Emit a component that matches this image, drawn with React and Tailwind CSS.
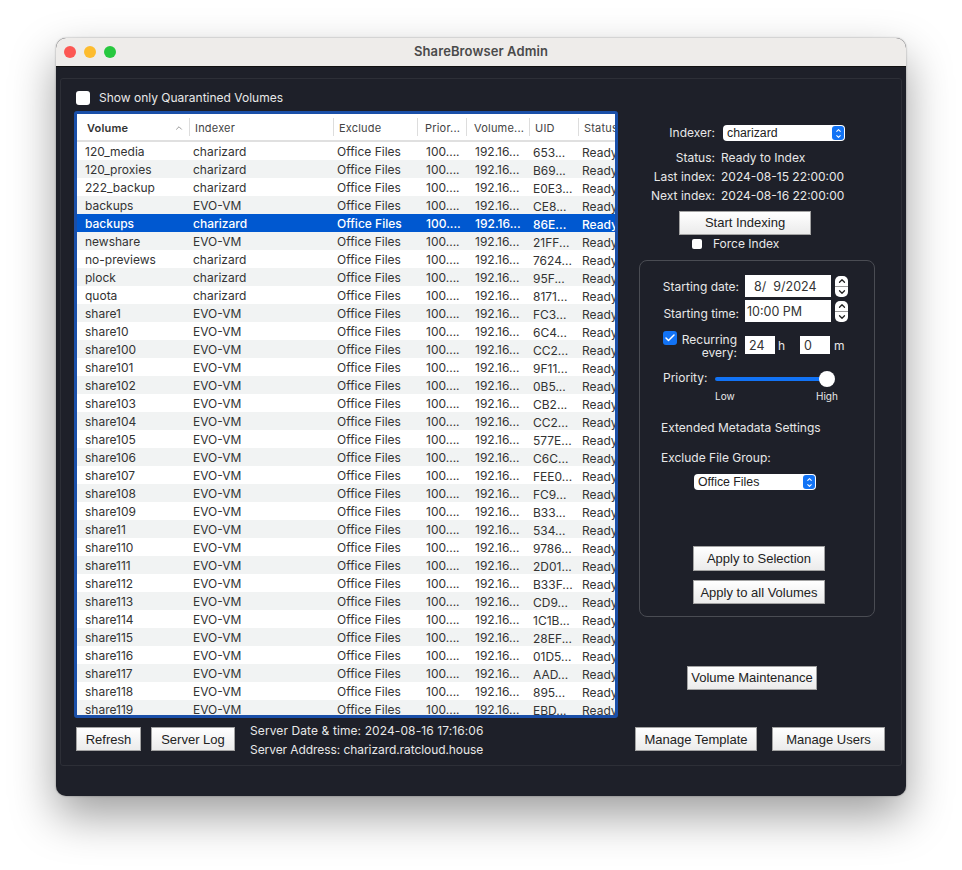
import React from "react";
import { Check, ChevronUp, ChevronDown } from "lucide-react";

const rows = [
  ["120_media", "charizard", "653..."],
  ["120_proxies", "charizard", "B69..."],
  ["222_backup", "charizard", "E0E3..."],
  ["backups", "EVO-VM", "CE8..."],
  ["backups", "charizard", "86E..."],
  ["newshare", "EVO-VM", "21FF..."],
  ["no-previews", "charizard", "7624..."],
  ["plock", "charizard", "95F..."],
  ["quota", "charizard", "8171..."],
  ["share1", "EVO-VM", "FC3..."],
  ["share10", "EVO-VM", "6C4..."],
  ["share100", "EVO-VM", "CC2..."],
  ["share101", "EVO-VM", "9F11..."],
  ["share102", "EVO-VM", "0B5..."],
  ["share103", "EVO-VM", "CB2..."],
  ["share104", "EVO-VM", "CC2..."],
  ["share105", "EVO-VM", "577E..."],
  ["share106", "EVO-VM", "C6C..."],
  ["share107", "EVO-VM", "FEE0..."],
  ["share108", "EVO-VM", "FC9..."],
  ["share109", "EVO-VM", "B33..."],
  ["share11", "EVO-VM", "534..."],
  ["share110", "EVO-VM", "9786..."],
  ["share111", "EVO-VM", "2D01..."],
  ["share112", "EVO-VM", "B33F..."],
  ["share113", "EVO-VM", "CD9..."],
  ["share114", "EVO-VM", "1C1B..."],
  ["share115", "EVO-VM", "28EF..."],
  ["share116", "EVO-VM", "01D5..."],
  ["share117", "EVO-VM", "AAD..."],
  ["share118", "EVO-VM", "895..."],
  ["share119", "EVO-VM", "EBD..."],
];

const gridCols = "grid grid-cols-[113px_144px_84px_49px_63px_49px_37px]";
const headCell = "flex h-[18px] items-center border-r border-[#ddd] pt-[2px] ";
const bodyCell = "h-[18px] leading-[20px] ";
const lowCell = "h-[18px] leading-[22px] ";

const Btn = ({ className, children }) => (
  <button
    className={
      "flex items-center justify-center border border-[#a3a3a3] bg-linear-to-b from-white to-[#ebebeb] font-['Liberation_Sans',sans-serif] text-[13px] text-[#222] " +
      className
    }
  >
    {children}
  </button>
);

const Select = ({ className, value }) => (
  <div
    className={
      "flex h-[16px] w-[122px] items-center justify-between rounded-[4px] bg-white pl-[4px] pr-[1px] font-['Liberation_Sans',sans-serif] text-[12.3px] text-[#222] " +
      className
    }
  >
    <span>{value}</span>
    <span className="flex h-[14px] w-[12px] flex-col items-center justify-center rounded-[3px] bg-[#1273f5] text-white">
      <ChevronUp size={7} strokeWidth={3.5} className="-mb-[1px]" />
      <ChevronDown size={7} strokeWidth={3.5} />
    </span>
  </div>
);

const Stepper = () => (
  <div className="ml-[4px] flex h-[21px] w-[13px] flex-col items-center justify-center rounded-[5px] bg-white text-[#222]">
    <ChevronUp size={10} strokeWidth={3} />
    <div className="h-px w-full bg-[#999]" />
    <ChevronDown size={10} strokeWidth={3} />
  </div>
);

const InfoRow = ({ label, value }) => (
  <div className="flex h-[19px] items-center">
    <span className="w-[76px] text-right">{label}</span>
    <span className="ml-[6px]">{value}</span>
  </div>
);

const VolumeTable = () => (
  <div className="h-[607px] w-[544px] rounded-[3px] border-[3px] border-[#1a4fa8]">
    <div className="relative h-full overflow-hidden bg-white font-['Inter',sans-serif] text-[12px] text-[#333]">
      <div className={gridCols + " h-[28px] items-center border-b-2 border-[#e0e0e0] text-[11px] tracking-[0.2px] text-[#444]"}>
        <div className={headCell + "justify-between pl-[10px] pr-[5px] font-semibold text-[#333]"}>
          Volume
          <ChevronUp size={10} className="text-[#888]" />
        </div>
        <div className={headCell + "pl-[5px]"}>Indexer</div>
        <div className={headCell + "pl-[5px]"}>Exclude</div>
        <div className={headCell + "pl-[7px]"}>Prior...</div>
        <div className={headCell + "pl-[7px]"}>Volume...</div>
        <div className={headCell + "pl-[5px]"}>UID</div>
        <div className="flex h-[18px] items-center overflow-hidden pl-[5px] pt-[2px]">Status</div>
      </div>
      {rows.map((row, i) => {
        const selected = i === 4;
        const bg = selected ? "bg-[#0058d0] text-white font-medium" : i % 2 === 1 ? "bg-[#f1f3f3]" : "bg-white";
        return (
          <div key={i} className={gridCols + " h-[18px] whitespace-nowrap " + bg}>
            <div className={bodyCell + "pl-[8px]"}>{row[0]}</div>
            <div className={bodyCell + "pl-[3px]"}>{row[1]}</div>
            <div className={bodyCell + "pl-[3px]"}>Office Files</div>
            <div className={bodyCell + "pl-[8px]"}>100....</div>
            <div className={bodyCell + "pl-[8px]"}>192.16...</div>
            <div className={lowCell + "pl-[3px]"}>{row[2]}</div>
            <div className={lowCell + "overflow-hidden pl-[3px]"}>Ready</div>
          </div>
        );
      })}
    </div>
  </div>
);

const SchedulePanel = () => (
  <div className="mt-[11px] h-[357px] w-[236px] rounded-[8px] border border-[#4a4c53] pt-[14px]">
    <div className="flex h-[22px] items-center">
      <span className="w-[99px] pt-[2px] text-right">Starting date:</span>
      <div className="ml-[6px] flex h-[22px] w-[86px] items-center bg-white pl-[9px] pt-[2px] text-[12.5px] text-[#333]">
        8/&nbsp; 9/2024
      </div>
      <Stepper />
    </div>
    <div className="mt-[3px] flex h-[22px] items-center">
      <span className="w-[99px] pt-[6px] text-right">Starting time:</span>
      <div className="ml-[6px] flex h-[22px] w-[86px] items-center bg-white pl-[2px] pt-[2px] text-[12.5px] text-[#333]">
        10:00 PM
      </div>
      <Stepper />
    </div>
    <div className="mt-[9px] flex h-[28px] items-start">
      <span className="ml-[23px] flex h-[14px] w-[14px] items-center justify-center rounded-[3px] bg-[#1273f5] text-white">
        <Check size={12} strokeWidth={3} />
      </span>
      <span className="w-[60px] pt-[2px] text-right leading-[13px]">
        Recurring
        <br />
        every:
      </span>
      <div className="ml-[8px] mt-[4px] flex items-center">
        <div className="flex h-[18px] w-[30px] items-center bg-white pl-[4px] pt-[2px] text-[12.5px] text-[#333]">
          24
        </div>
        <span className="ml-[3px] w-[22px] pt-[2px]">h</span>
        <div className="flex h-[18px] w-[30px] items-center bg-white pl-[4px] pt-[2px] text-[12.5px] text-[#333]">
          0
        </div>
        <span className="ml-[4px] pt-[2px]">m</span>
      </div>
    </div>
    <div className="mt-[11px] flex h-[18px] items-center pl-[23px]">
      <span className="-mt-[2px] w-[52px]">Priority:</span>
      <div className="flex h-[16px] w-[120px] items-center">
        <div className="h-[4px] w-[112px] rounded-l-full bg-[#1273f5]" />
        <div className="-ml-[8px] h-[16px] w-[16px] rounded-full bg-white" />
      </div>
    </div>
    <div className="mt-[2px] flex h-[12px] items-center pl-[75px] text-[10px]">
      <span className="w-[101px]">Low</span>
      <span>High</span>
    </div>
    <div className="ml-[21px] mt-[18px] h-[16px] leading-[16px]">Extended Metadata Settings</div>
    <div className="ml-[21px] mt-[14px] h-[16px] leading-[16px]">Exclude File Group:</div>
    <Select className="ml-[54px] mt-[8px]" value="Office Files" />
    <Btn className="ml-[53px] mt-[56px] h-[25px] w-[132px]">Apply to Selection</Btn>
    <Btn className="ml-[53px] mt-[9px] h-[24px] w-[132px] pt-[1px]">Apply to all Volumes</Btn>
  </div>
);

const App = () => {
  return (
    <div className="h-[870px] w-[962px] overflow-hidden bg-white pl-[56px] pt-[38px]">
      <div className="h-[758px] w-[850px] overflow-hidden rounded-[10px] bg-[#1e2029] shadow-[0_20px_45px_rgba(0,0,0,0.38),0_0_2px_rgba(0,0,0,0.4)]">
        <div className="relative flex h-[29px] items-center justify-center border-b border-[#111] bg-[#eeecea] font-['Inter',sans-serif] text-[13px] font-semibold tracking-[0.1px] text-[#4a4a4a]">
          <div className="absolute left-[8px] top-[8px] flex gap-[8px]">
            <span className="h-[12px] w-[12px] rounded-full bg-[#fc5753]" />
            <span className="h-[12px] w-[12px] rounded-full bg-[#fdbc2e]" />
            <span className="h-[12px] w-[12px] rounded-full bg-[#27c83f]" />
          </div>
          ShareBrowser Admin
        </div>
        <div className="px-[4px] pt-[11px]">
          <div className="h-[688px] w-[842px] rounded-[3px] border border-[#2d2f37] font-['Inter',sans-serif] text-[12px] text-[#e8e8e8]">
            <div className="flex h-[639px] pl-[13px]">
              <div className="w-[544px] pt-[11px]">
                <div className="flex h-[15px] items-center pl-[2px]">
                  <span className="h-[14px] w-[14px] rounded-[3px] bg-white" />
                  <span className="ml-[9px]">Show only Quarantined Volumes</span>
                </div>
                <div className="mt-[6px]">
                  <VolumeTable />
                </div>
              </div>
              <div className="ml-[21px] w-[240px] pt-[45px]">
                <div className="flex items-center">
                  <span className="w-[76px] text-right">Indexer:</span>
                  <Select className="ml-[8px]" value="charizard" />
                </div>
                <div className="mt-[6px]">
                  <InfoRow label="Status:" value="Ready to Index" />
                  <InfoRow label="Last index:" value="2024-08-15 22:00:00" />
                  <InfoRow label="Next index:" value="2024-08-16 22:00:00" />
                </div>
                <Btn className="ml-[40px] mt-[6px] h-[24px] w-[132px]">Start Indexing</Btn>
                <div className="mt-[4px] flex h-[10px] items-center pl-[53px]">
                  <span className="h-[10px] w-[10px] rounded-[2px] bg-white" />
                  <span className="ml-[11px]">Force Index</span>
                </div>
                <SchedulePanel />
                <Btn className="ml-[48px] mt-[49px] h-[24px] w-[130px]">Volume Maintenance</Btn>
              </div>
            </div>
            <div className="mt-[9px] flex h-[24px] pl-[15px]">
              <Btn className="h-[24px] w-[65px] pt-[1px]">Refresh</Btn>
              <Btn className="ml-[10px] h-[24px] w-[84px] pt-[1px]">Server Log</Btn>
              <div className="-mt-[6px] ml-[15px] w-[385px] self-start leading-[19px]">
                <div className="tracking-[0.1px]">Server Date &amp; time: 2024-08-16 17:16:06</div>
                <div className="tracking-[-0.07px]">Server Address: charizard.ratcloud.house</div>
              </div>
              <Btn className="h-[24px] w-[122px] pt-[1px]">Manage Template</Btn>
              <Btn className="ml-[15px] h-[24px] w-[113px] pt-[1px]">Manage Users</Btn>
            </div>
          </div>
        </div>
      </div>
    </div>
  );
};

export default App;
